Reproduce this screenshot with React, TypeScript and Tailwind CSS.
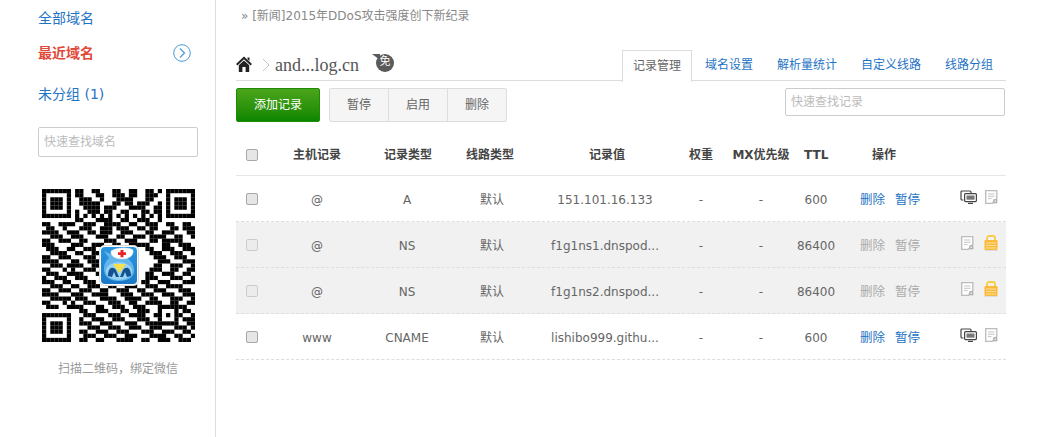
const FONT = "font-['DejaVu_Sans','Noto_Sans_CJK_SC',sans-serif]";

const QR_ROWS = [
  "........110011000110011001101........",
  "........110001100111011001110........",
  "........011100100011110001100........",
  "........011111000110110111001........",
  "........001111011100011110011........",
  "........100111011001100011011........",
  "........011000110111011000110........",
  "........110001111001100111001........",
  "1100110100111001111001100111001100110",
  "0110011001110011101110011011000110111",
  "1111000110011011100111000110011100011",
  "0011100111000111001100111011110011001",
  "1100111001100001110011100011011111000",
  "1110001111001110011001111100011001110",
  "0111001100111001100000000110011100111",
  "0011110011001111001000000011100111001",
  "1100111000111001110000000001110011100",
  "1111000110011100110000000000111000111",
  "0011100111001110000000000001100111001",
  "1100011100111001110000000011100110011",
  "0111001111000111000000000110011100110",
  "1001110011100011100000000111000111001",
  "1110011000111001111000001100111000111",
  "0011100110011100110011100111001111000",
  "1100111001110011001110011001110001110",
  "1111000111001111000111001110011100111",
  "0011110011100011110011110011000111001",
  "1100011100111000111001100111100110011",
  "0111001111000110011100111000111001100",
  ".........1100111000110011100011100110",
  ".........0111000111001111001110011001",
  ".........1001110011100011100111000111",
  ".........1110011100011100111001110011",
  ".........0011100111001110011100011101",
  ".........1100111001110001110011100110",
  ".........0111001110011100011110011001",
  ".........1100110001111001100111001110",
];

function qrCell(row: number, col: number) {
  const finder = (r: number, c: number) => {
    if (r < 0 || r > 6 || c < 0 || c > 6) return null;
    return r === 0 || r === 6 || c === 0 || c === 6 || (r >= 2 && r <= 4 && c >= 2 && c <= 4);
  };
  for (const [r0, c0] of [[0, 0], [0, 30], [30, 0]]) {
    const hit = finder(row - r0, col - c0);
    if (hit !== null) return hit;
    if (row >= r0 - 1 && row <= r0 + 7 && col >= c0 - 1 && col <= c0 + 7) return false;
  }
  if (row >= 28 && row <= 32 && col >= 28 && col <= 32) {
    const r = Math.abs(row - 30);
    const c = Math.abs(col - 30);
    return r === 2 || c === 2 || (r === 0 && c === 0);
  }
  if (row === 6) return col % 2 === 0;
  if (col === 6) return row % 2 === 0;
  return QR_ROWS[row]?.[col] === "1";
}

function QrCode() {
  const cells: React.ReactNode[] = [];
  for (let r = 0; r < 37; r++) {
    for (let c = 0; c < 37; c++) {
      if (qrCell(r, c)) cells.push(<rect key={`${r}-${c}`} x={c} y={r} width={1.02} height={1.02} fill="#000" />);
    }
  }
  return (
    <div className="relative w-[153px] h-[153px]">
      <svg viewBox="0 0 37 37" width={153} height={153}>
        {cells}
      </svg>
      <svg className="absolute left-[57px] top-[56px]" width={40} height={41} viewBox="0 0 40 41">
        <defs>
          <linearGradient id="logoBg" x1="0" y1="0" x2="0" y2="1">
            <stop offset="0" stopColor="#2a97e2" />
            <stop offset="1" stopColor="#1a78c6" />
          </linearGradient>
        </defs>
        <rect x="0.5" y="0.5" width="39" height="40" rx="5" fill="#fff" stroke="#d8d8d8" />
        <rect x="2" y="2" width="36" height="37" rx="4" fill="url(#logoBg)" />
        <path d="M5 6 L14 10 C24 9 34 14 35 24 C36 32 29 36 20 36 C11 36 5 32 5 24 C5 18 8 15 10 13 Z" fill="#62b6ec" />
        <ellipse cx="20" cy="26" rx="13" ry="9" fill="#9ad2f4" />
        <path d="M12 6 C18 2 30 2 34 5 C35 10 31 14 23 14 C16 14 11 11 12 6 Z" fill="#fff" stroke="#c9d4da" strokeWidth="0.5" />
        <path d="M21.5 5 h3 v2.3 h2.5 v2.7 h-2.5 v2.3 h-3 v-2.3 h-2.5 v-2.7 h2.5 Z" fill="#e8242a" />
        <path d="M14 19 H27 L20.5 28 Z" fill="#f6e04a" />
        <path d="M9 31 C9 22 14 21 17 25 L20 32 L17 32 L15 27 L13 32 Z" fill="#15518f" />
        <path d="M32 31 C32 22 27 21 24 25 L21 32 L24 32 L26 27 L28 32 Z" fill="#15518f" />
      </svg>
    </div>
  );
}

function HomeIcon() {
  return (
    <svg className="mb-[2px]" width={16} height={16} viewBox="0 0 16 16">
      <path d="M8 0.5 L16 8 L14.6 9.4 L8 3.2 L1.4 9.4 L0 8 Z" fill="#222" />
      <path d="M11.5 1.5 H13.5 V5 L11.5 3.2 Z" fill="#222" />
      <path d="M2.8 9.2 L8 4.6 L13.2 9.2 V16 H9.6 V11 H6.4 V16 H2.8 Z" fill="#222" />
    </svg>
  );
}

function MonitorsIcon() {
  return (
    <svg width={17} height={14} viewBox="0 0 17 14" fill="none">
      <path d="M3.5 10 H2 a1 1 0 0 1 -1 -1 V2 a1 1 0 0 1 1 -1 H10 a1 1 0 0 1 1 1 V3" stroke="#444" strokeWidth="1.2" />
      <rect x="4.6" y="3.6" width="11.8" height="8" rx="1" fill="#fff" stroke="#444" strokeWidth="1.2" />
      <rect x="6.5" y="5.5" width="8" height="4.2" fill="#777" />
      <path d="M8 13.4 H13" stroke="#444" strokeWidth="1.2" />
    </svg>
  );
}

function DocIcon() {
  return (
    <svg width={13} height={14} viewBox="0 0 13 14" fill="none">
      <path d="M0.7 0.7 H11.8 V8.5 L7.5 13.3 H0.7 Z" fill="#fff" stroke="#bbb" strokeWidth="1.3" />
      <path d="M3 4 H9.5 M3 6.3 H9.5 M3 8.6 H6.5" stroke="#c4c4c4" strokeWidth="1" />
      <rect x="8.3" y="9.3" width="4" height="4" fill="#aaa" />
      <rect x="9.5" y="10.5" width="1.6" height="1.6" fill="#eee" />
    </svg>
  );
}

function LockIcon() {
  return (
    <svg width={14} height={16} viewBox="0 0 14 16">
      <path d="M3 6 V3 a2 2 0 0 1 2 -2 H9 a2 2 0 0 1 2 2 V6" fill="none" stroke="#f5cf45" strokeWidth="1.8" />
      <rect x="0.5" y="5" width="13" height="10" rx="1.2" fill="#fbb93a" />
      <path d="M2 8 H12 M2 10.5 H12 M2 13 H12" stroke="#fde0a0" strokeWidth="1" />
      <rect x="0.5" y="15" width="13" height="1" fill="#ddd" />
    </svg>
  );
}

const COLS = "grid grid-cols-[32px_98px_84px_80px_154px_34px_86px_24px_1fr] items-center text-center";

const RECORDS = [
  { host: "@", type: "A", value: "151.101.16.133", ttl: "600", locked: false },
  { host: "@", type: "NS", value: "f1g1ns1.dnspod...", ttl: "86400", locked: true },
  { host: "@", type: "NS", value: "f1g1ns2.dnspod...", ttl: "86400", locked: true },
  { host: "www", type: "CNAME", value: "lishibo999.githu...", ttl: "600", locked: false },
];

const CHECKBOX = "appearance-none block w-[12px] h-[12px] rounded-[2px] border";

function RecordRow({ record }: { record: (typeof RECORDS)[number] }) {
  const { locked } = record;
  return (
    <div className={`${COLS} h-[46px] border-b border-dashed border-[#ddd] pt-[2px] text-[#666] ${locked ? "bg-[#f1f1f1]" : ""}`}>
      <div className="flex -translate-y-[1px] justify-center">
        <input
          type="checkbox"
          disabled={locked}
          className={`${CHECKBOX} ${locked ? "bg-[#ececec] border-[#ccc]" : "bg-[#e6e6e6] border-[#a8a8a8]"}`}
        />
      </div>
      <div>{record.host}</div>
      <div className="pr-[2px]">{record.type}</div>
      <div className="pl-[4px]">默认</div>
      <div className="whitespace-nowrap pr-[4px]">{record.value}</div>
      <div>-</div>
      <div>-</div>
      <div className="flex justify-center whitespace-nowrap">{record.ttl}</div>
      <div className="flex items-center pl-[32px]">
        <span className={`translate-y-[1px] text-[12.5px] ${locked ? "text-[#aaa]" : "text-[#1f74c4]"}`}>删除</span>
        <span className={`ml-[10px] translate-y-[1px] text-[12.5px] ${locked ? "text-[#aaa]" : "text-[#1f74c4]"}`}>暂停</span>
        <div className={`flex items-center -translate-y-[3px] ${locked ? "ml-[41px]" : "ml-[40px]"}`}>
          {locked ? (
            <>
              <DocIcon />
              <span className="ml-[10px]">
                <LockIcon />
              </span>
            </>
          ) : (
            <>
              <MonitorsIcon />
              <span className="ml-[8px]">
                <DocIcon />
              </span>
            </>
          )}
        </div>
      </div>
    </div>
  );
}

const TABS = ["域名设置", "解析量统计", "自定义线路", "线路分组"];

export default function App() {
  return (
    <div className={`${FONT} flex h-[437px] w-[1049px] overflow-hidden bg-white text-[12px]`}>
      <aside className="w-[216px] shrink-0 border-r border-[#ddd] pl-[38px] pt-[9px]">
        <div className="text-[14px] leading-[18px] text-[#1f74c4]">全部域名</div>
        <div className="mt-[17px] flex h-[18px] w-[153px] items-center justify-between">
          <span className="text-[14px] font-bold text-[#e04a3a]">最近域名</span>
          <svg width={18} height={18} viewBox="0 0 18 18" fill="none">
            <circle cx="9" cy="9" r="8.3" stroke="#4a9ad4" />
            <path d="M7 4.5 L11.5 9 L7 13.5" stroke="#4a9ad4" strokeWidth="1.2" />
          </svg>
        </div>
        <div className="mt-[23px] text-[14px] leading-[18px] text-[#1f74c4]">未分组 (1)</div>
        <div className="mt-[24px] flex h-[30px] w-[160px] items-center rounded-[2px] border border-[#ccc] pl-[5px] text-[#bbb]">
          快速查找域名
        </div>
        <div className="mt-[32px] ml-[4px]">
          <QrCode />
        </div>
        <div className="mt-[18px] w-[160px] text-center text-[#999]">扫描二维码，绑定微信</div>
      </aside>

      <main className="w-[790px] pl-[20px]">
        <div className="pl-[5px] pt-[7px] leading-[18px] text-[#888]">» [新闻]2015年DDoS攻击强度创下新纪录</div>
        <div className="mt-[24px] flex h-[32px] items-center border-b border-[#ddd]">
          <HomeIcon />
          <svg className="ml-[10px]" width={8} height={14} viewBox="0 0 8 14" fill="none">
            <path d="M1 1 L7 7 L1 13" stroke="#c4c4c4" />
          </svg>
          <span className="ml-[5px] pt-[2px] font-['Liberation_Serif',serif] text-[18px] text-[#555]">and...log.cn</span>
          <span className="relative ml-[17px] mb-[4px] flex h-[18px] w-[18px] items-center justify-center rounded-full bg-[#5a5a5a] text-[11px] text-white">
            <span className="absolute -left-[4px] top-0 h-0 w-0 border-l-[8px] border-t-[6px] border-l-transparent border-t-[#5a5a5a]" />
            <span className="relative">免</span>
          </span>
          <div className="ml-auto flex items-center">
            <div className="mr-[13px] flex h-[32px] w-[70px] translate-y-[1px] items-center justify-center border border-b-0 border-[#ddd] bg-white text-[#666]">
              记录管理
            </div>
            {TABS.map((t) => (
              <span key={t} className="mr-[24px] text-[#1f74c4] last:mr-[13px]">
                {t}
              </span>
            ))}
          </div>
        </div>

        <div className="mt-[7px] flex items-start">
          <button className="h-[34px] w-[84px] rounded-[2px] border border-[#1d8a08] bg-linear-to-b from-[#4aa51a] to-[#078600] text-white">
            添加记录
          </button>
          <div className="ml-[9px] flex h-[34px] w-[178px] overflow-hidden rounded-[2px] border border-[#ddd] bg-[#f5f5f5] text-[#666]">
            <span className="flex flex-1 items-center justify-center">暂停</span>
            <span className="flex flex-1 items-center justify-center border-x border-[#ddd]">启用</span>
            <span className="flex flex-1 items-center justify-center">删除</span>
          </div>
          <div className="ml-[278px] flex h-[28px] w-[220px] items-center rounded-[2px] border border-[#ccc] pl-[5px] text-[#bbb]">
            快速查找记录
          </div>
        </div>

        <div className="mt-[13px] w-[770px]">
          <div className={`${COLS} h-[41px] border-b border-[#e6e6e6] pb-[1px] font-bold text-[#444]`}>
            <div className="flex justify-center">
              <input type="checkbox" className={`${CHECKBOX} bg-[#e6e6e6] border-[#a8a8a8]`} />
            </div>
            <div>主机记录</div>
            <div>记录类型</div>
            <div>线路类型</div>
            <div>记录值</div>
            <div>权重</div>
            <div className="whitespace-nowrap">MX优先级</div>
            <div>TTL</div>
            <div className="pl-[44px] text-left">操作</div>
          </div>
          {RECORDS.map((r, i) => (
            <RecordRow key={i} record={r} />
          ))}
        </div>
      </main>
    </div>
  );
}
